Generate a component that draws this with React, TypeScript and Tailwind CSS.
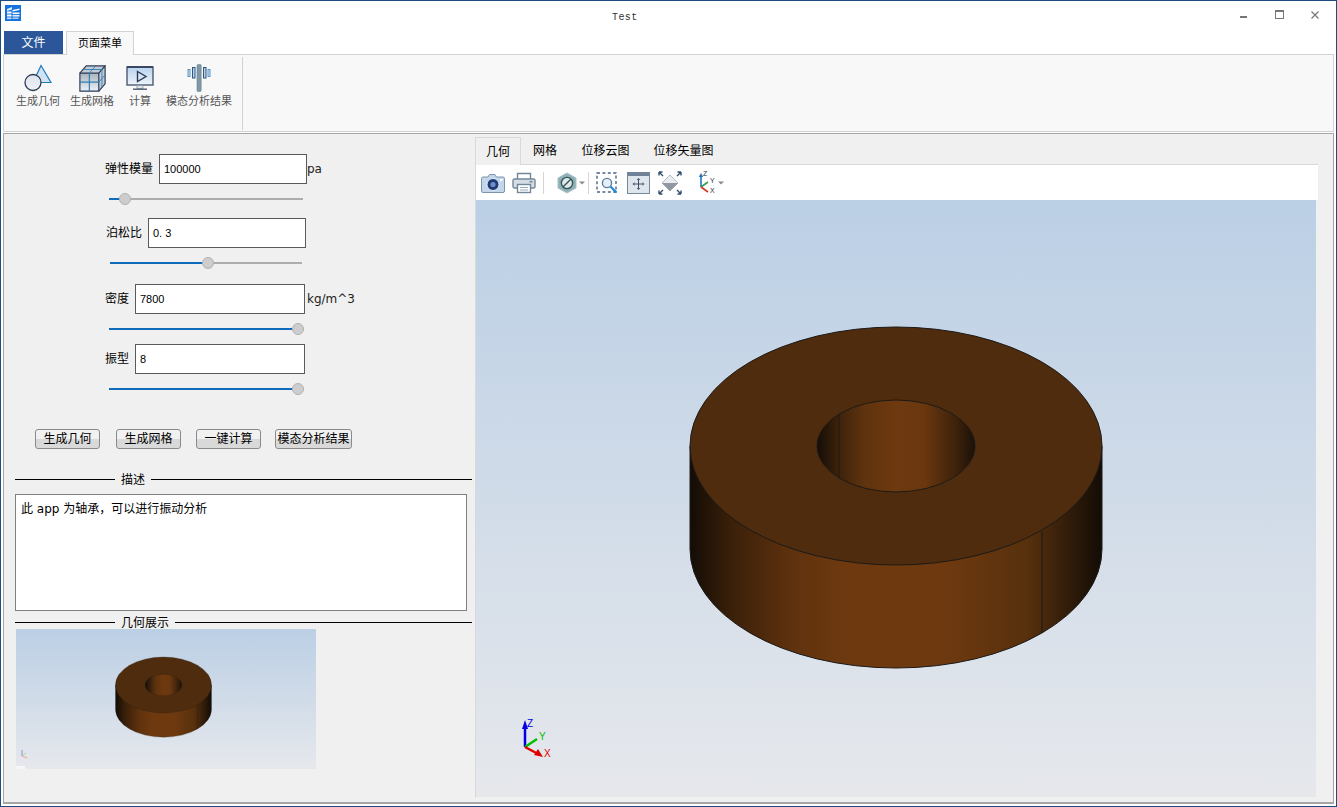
import React from "react";

const font = "font-['Liberation_Sans','Noto_Sans_CJK_SC',sans-serif]";
const wideFont = "font-['DejaVu_Sans','Noto_Sans_CJK_SC',sans-serif]";

// ---------- ribbon icons ----------
const GeometryIcon = () => (
  <svg width="28" height="28" viewBox="0 0 28 28">
    <defs>
      <linearGradient id="geoCircle" x1="0" y1="0" x2="0" y2="1">
        <stop offset="0" stopColor="#dfe4ec" />
        <stop offset="1" stopColor="#eef1f6" />
      </linearGradient>
    </defs>
    <path d="M17 1.5 L27 18.5 H9 Z" fill="#cfe3f4" stroke="#1f7ab8" strokeWidth="1.2" strokeLinejoin="miter" />
    <circle cx="9" cy="18.5" r="8" fill="url(#geoCircle)" stroke="#2b3a55" strokeWidth="1.3" />
  </svg>
);

const MeshIcon = () => (
  <svg width="27" height="27" viewBox="0 0 30 30">
    <defs>
      <linearGradient id="meshFace" x1="0" y1="0" x2="0" y2="1">
        <stop offset="0" stopColor="#aab3be" />
        <stop offset="1" stopColor="#eaf0f6" />
      </linearGradient>
    </defs>
    <path d="M1 9 L8 1 L29 1 L29 21 L22 29 L1 29 Z" fill="#c3ccd6" />
    <path d="M1 9 H22 V29 H1 Z" fill="url(#meshFace)" stroke="#2b3a55" strokeWidth="1.3" />
    <path d="M1 9 L8 1 H29 L22 9 M29 1 V21 L22 29" fill="none" stroke="#2b3a55" strokeWidth="1.3" />
    <path d="M11.5 9 V29 M1 19 H22" stroke="#2f7fb5" strokeWidth="1.3" />
    <path d="M11.5 9 L18.5 1 M5 5 H26 M22 19 L29 11 M25.5 5 V25" stroke="#2f7fb5" strokeWidth="1" fill="none" />
  </svg>
);

const ScreenIcon = () => (
  <svg width="28" height="24" viewBox="0 0 28 24" className="mb-[2px]">
    <defs>
      <linearGradient id="screenFace" x1="0" y1="0" x2="0" y2="1">
        <stop offset="0" stopColor="#b9d3ee" />
        <stop offset="1" stopColor="#eef4fa" />
      </linearGradient>
    </defs>
    <rect x="1" y="1" width="26" height="18" fill="url(#screenFace)" stroke="#4a5a72" strokeWidth="1.4" />
    <path d="M1 1 H27" stroke="#2b3a55" strokeWidth="1.6" />
    <path d="M11.5 5.5 L20 10.5 L11.5 15.5 Z" fill="none" stroke="#2b3a55" strokeWidth="1.4" />
    <rect x="11" y="19.5" width="6" height="3" fill="#dfe4ea" stroke="#8a96a4" strokeWidth="0.8" />
    <path d="M7 23.2 H21" stroke="#4a5a72" strokeWidth="1.4" />
  </svg>
);

const ModalIcon = () => (
  <svg width="24" height="28" viewBox="0 0 24 28">
    <rect x="10" y="0.5" width="4.2" height="27" rx="1" fill="#7f98a6" stroke="#6a8494" strokeWidth="0.6" />
    <rect x="5.5" y="3.5" width="2.5" height="10.5" fill="#b7d2e8" stroke="#2f5780" strokeWidth="1" />
    <rect x="16.5" y="3.5" width="2.5" height="10.5" fill="#b7d2e8" stroke="#2f5780" strokeWidth="1" />
    <rect x="1" y="5.5" width="2" height="7" fill="#d4e6f4" stroke="#4a8fc4" strokeWidth="0.9" />
    <rect x="21" y="5.5" width="2" height="7" fill="#d4e6f4" stroke="#4a8fc4" strokeWidth="0.9" />
  </svg>
);

const AppIcon = () => (
  <svg width="16" height="16" viewBox="0 0 16 16" className="shrink-0">
    <rect width="16" height="16" fill="#1672dd" />
    <path d="M2 4 L7 2 V4.5 L2 6 Z" fill="#dcecff" />
    <rect x="2" y="6.5" width="4.5" height="2" fill="#fff" />
    <rect x="2" y="9.5" width="4.5" height="2" fill="#fff" />
    <rect x="2" y="12.5" width="4.5" height="1.6" fill="#cfe3fb" />
    <path d="M7.5 5 L14.5 3.5 V5 L7.5 6.5 Z" fill="#fff" />
    <rect x="7.5" y="7.5" width="7" height="1.6" fill="#fff" />
    <rect x="7.5" y="10" width="7" height="1.6" fill="#e4f0fe" />
    <rect x="7.5" y="12.5" width="6" height="1.4" fill="#b9d6f8" />
  </svg>
);

// ---------- toolbar icons ----------
const Caret = () => (
  <svg width="6" height="4" viewBox="0 0 6 4" className="shrink-0">
    <path d="M0 0.5 H6 L3 3.5 Z" fill="#8a8a8a" />
  </svg>
);

const CameraIcon = () => (
  <svg width="24" height="20" viewBox="0 0 24 20">
    <path d="M2 4 H7 L8.5 1.5 H14 L15.5 4 H22 Q23.5 4 23.5 5.5 V18 Q23.5 19.5 22 19.5 H2 Q0.5 19.5 0.5 18 V5.5 Q0.5 4 2 4 Z" fill="#c3d6ea" stroke="#7d94ad" strokeWidth="1" />
    <circle cx="12" cy="11.5" r="6" fill="#203a78" stroke="#e6eef7" strokeWidth="1" />
    <circle cx="12" cy="11.5" r="2.6" fill="#6f8fc4" />
    <rect x="19" y="6" width="2.5" height="2" fill="#fff" />
  </svg>
);

const PrinterIcon = () => (
  <svg width="24" height="22" viewBox="0 0 24 22">
    <path d="M5.5 7 V1.5 H18.5 V7" fill="#fff" stroke="#73879a" strokeWidth="1.4" />
    <rect x="1" y="7" width="22" height="9" rx="1.5" fill="#d5dde5" stroke="#73879a" strokeWidth="1.4" />
    <rect x="17.5" y="9" width="3" height="1.5" fill="#73879a" />
    <rect x="5.5" y="12.5" width="13" height="8" fill="#fff" stroke="#73879a" strokeWidth="1.4" />
    <path d="M8 15.5 H16 M8 18 H16" stroke="#9aa9b8" strokeWidth="1" />
  </svg>
);

const HexIcon = () => (
  <svg width="20" height="22" viewBox="0 0 20 22">
    <path d="M10 1 L19 6 V16 L10 21 L1 16 V6 Z" fill="#8fb0b4" stroke="#a8c3c7" strokeWidth="1" />
    <circle cx="10" cy="11" r="5.6" fill="#dfe9ea" stroke="#33555c" strokeWidth="1.4" />
    <path d="M6.2 14.8 L13.8 7.2" stroke="#33555c" strokeWidth="1.4" />
  </svg>
);

const ZoomBoxIcon = () => (
  <svg width="22" height="22" viewBox="0 0 22 22">
    <rect x="1" y="1" width="19" height="19" fill="none" stroke="#4a6484" strokeWidth="1.4" strokeDasharray="3 2.4" />
    <circle cx="11" cy="11" r="4.6" fill="#e6f0f8" stroke="#5b7fa0" strokeWidth="1.4" />
    <path d="M14.5 14.5 L20.5 20.5" stroke="#1c8ad6" strokeWidth="2.2" />
  </svg>
);

const FitIcon = () => (
  <svg width="23" height="22" viewBox="0 0 23 22">
    <rect x="0.5" y="0.5" width="22" height="21" fill="#dfe5ec" stroke="#76889b" />
    <rect x="0.5" y="0.5" width="22" height="3.5" fill="#6f8298" />
    <path d="M11.5 8 V16 M7.5 12 H15.5" stroke="#3f5368" strokeWidth="1" />
    <path d="M11.5 6 L9.8 8 H13.2 Z M11.5 18 L9.8 16 H13.2 Z M5.5 12 L7.5 10.3 V13.7 Z M17.5 12 L15.5 10.3 V13.7 Z" fill="#3f5368" />
  </svg>
);

const DiamondIcon = () => (
  <svg width="24" height="24" viewBox="0 0 24 24">
    <path d="M12 4 L20 12 L12 20 L4 12 Z" fill="#e9ebee" stroke="#b4bcc5" />
    <path d="M4 12 L20 12 L12 20 Z" fill="#8f98a3" />
    <path d="M1 1 L5 5 M1 1 V4.5 M1 1 H4.5 M23 1 L19 5 M23 1 V4.5 M23 1 H19.5 M1 23 L5 19 M1 23 V19.5 M1 23 H4.5 M23 23 L19 19 M23 23 V19.5 M23 23 H19.5" stroke="#31506f" strokeWidth="1.4" fill="none" />
  </svg>
);

const AxesSmall = () => (
  <svg width="20" height="24" viewBox="0 0 20 24">
    <path d="M4 16 V5" stroke="#2273c4" strokeWidth="1.6" />
    <path d="M4 2 L1.8 6 H6.2 Z" fill="#2273c4" />
    <path d="M4 16 L11 11" stroke="#33a04a" strokeWidth="1.6" />
    <path d="M4 16 L11 21" stroke="#d9342b" strokeWidth="1.6" />
    <text x="6" y="5" fontSize="7" fill="#333" fontFamily="Liberation Sans">Z</text>
    <text x="13" y="12" fontSize="7" fill="#333" fontFamily="Liberation Sans">Y</text>
    <text x="13" y="22" fontSize="7" fill="#333" fontFamily="Liberation Sans">X</text>
  </svg>
);

// ---------- model ----------
const Bearing = ({ id }: { id: string }) => (
  <>
    <defs>
      <linearGradient id={`${id}-side`} x1="690" y1="0" x2="1102" y2="0" gradientUnits="userSpaceOnUse">
        <stop offset="0" stopColor="#130c06" />
        <stop offset="0.1" stopColor="#3a2009" />
        <stop offset="0.25" stopColor="#5f320e" />
        <stop offset="0.38" stopColor="#6e390f" />
        <stop offset="0.62" stopColor="#6e390f" />
        <stop offset="0.82" stopColor="#57300d" />
        <stop offset="0.93" stopColor="#2d1a09" />
        <stop offset="1" stopColor="#130c06" />
      </linearGradient>
      <linearGradient id={`${id}-hole`} x1="817" y1="0" x2="975" y2="0" gradientUnits="userSpaceOnUse">
        <stop offset="0" stopColor="#150d07" />
        <stop offset="0.15" stopColor="#40240b" />
        <stop offset="0.3" stopColor="#5f330e" />
        <stop offset="0.5" stopColor="#6e390f" />
        <stop offset="0.68" stopColor="#6a370f" />
        <stop offset="0.88" stopColor="#3d220b" />
        <stop offset="1" stopColor="#1c1108" />
      </linearGradient>
    </defs>
    <path
      d="M690 446 V549 A206 119 0 0 0 1102 549 V446 Z"
      fill={`url(#${id}-side)`}
      stroke="#1c1a18"
      strokeWidth="1"
    />
    <path d="M1042 531 V633" stroke="#1c1a18" strokeWidth="1" />
    <ellipse cx="896" cy="446" rx="206" ry="119" fill="#4f2c0d" stroke="#1c1a18" strokeWidth="1" />
    <ellipse cx="896" cy="446" rx="79" ry="46" fill={`url(#${id}-hole)`} stroke="#1c1a18" strokeWidth="1" />
    <path d="M839 414 V478" stroke="#1c1a18" strokeWidth="1" />
  </>
);

// ---------- form bits ----------
const Slider = ({ ml, width, thumb }: { ml: string; width: string; thumb: number }) => (
  <div className={`${ml} ${width} relative h-[16px] flex items-center mt-[7px]`}>
    <div className="w-full h-[2px] bg-[#adadad]" />
    <div className="absolute left-0 h-[2px] bg-[#0f6cbd]" style={{ width: thumb }} />
    <div
      className="absolute w-[12px] h-[12px] rounded-full bg-[#cdcdcd] border border-[#b2b2b2]"
      style={{ left: thumb - 6 }}
    />
  </div>
);

const Field = ({ value, width }: { value: string; width: string }) => (
  <div className={`${width} h-[30px] bg-white border border-[#5a5a5a] flex items-center pl-[4px] text-[11px] text-black shrink-0`}>
    {value}
  </div>
);

const ToolButton = ({ label, width }: { label: string; width: string }) => (
  <div className={`${width} h-[20px] flex items-center justify-center rounded-[3px] border border-[#8a8a8a] bg-[linear-gradient(#f1f1f1_50%,#d9d9d9_50%)] text-[12px] leading-none text-black whitespace-nowrap`}>
    {label}
  </div>
);

const Divider = ({ label, className }: { label: string; className: string }) => (
  <div className={`${className} ml-[11px] w-[457px] h-[14px] flex items-center gap-[6px] text-[12px] text-black`}>
    <div className="w-[100px] h-px bg-black" />
    <span className="whitespace-nowrap leading-none pt-[2px]">{label}</span>
    <div className="flex-1 h-px bg-black" />
  </div>
);

const RibbonItem = ({ label, icon, width }: { label: string; icon: React.ReactNode; width: string }) => (
  <div className={`${width} flex flex-col items-center`}>
    <div className="h-[28px] flex items-end justify-center">{icon}</div>
    <span className="mt-[2px] text-[11px] leading-[14px] text-[#555] whitespace-nowrap">{label}</span>
  </div>
);

const App = () => {
  return (
    <div className={`${font} w-[1337px] h-[807px] flex flex-col bg-white border border-[#1f4a7f] overflow-hidden`}>
      {/* Title bar */}
      <div className="h-[29px] shrink-0 flex items-start pt-[4px] pl-[4px]">
        <AppIcon />
        <span className="ml-[591px] mt-[7px] font-['Liberation_Mono',monospace] text-[10px] leading-[12px] tracking-[0.4px] text-[#333]">
          Test
        </span>
        <div className="ml-auto flex items-center pr-[17px] mt-[5px]">
          <div className="w-[7px] h-[2px] bg-[#777] mt-[5px]" />
          <div className="ml-[28px] w-[9px] h-[9px] border border-[#777] border-t-2" />
          <svg width="8" height="8" viewBox="0 0 8 8" className="ml-[27px]">
            <path d="M0.5 0.5 L7.5 7.5 M7.5 0.5 L0.5 7.5" stroke="#777" strokeWidth="1.2" />
          </svg>
        </div>
      </div>

      {/* Ribbon tabs */}
      <div className="h-[24px] shrink-0 flex items-end pl-[3px] gap-[3px]">
        <div className="w-[59px] h-[23px] bg-[#2b579a] text-white text-[12px] flex items-center justify-center">文件</div>
        <div className="w-[68px] h-[24px] -mb-px z-10 bg-[#f8f8f8] border border-[#d2d2d2] border-b-0 text-black text-[11px] flex items-center justify-center">
          页面菜单
        </div>
      </div>

      {/* Ribbon */}
      <div className="h-[78px] shrink-0 mx-[2px] bg-[#f8f8f8] border border-[#d2d2d2] flex items-start">
        <div className="flex pt-[9px] pl-[7px] w-[238px] h-[76px]">
          <RibbonItem label="生成几何" icon={<GeometryIcon />} width="w-[54px]" />
          <RibbonItem label="生成网格" icon={<MeshIcon />} width="w-[54px]" />
          <RibbonItem label="计算" icon={<ScreenIcon />} width="w-[42px]" />
          <RibbonItem label="模态分析结果" icon={<ModalIcon />} width="w-[76px]" />
        </div>
        <div className="w-px h-[73px] mt-[2px] bg-[#d2d2d2]" />
      </div>

      {/* Main panel */}
      <div className="h-[671px] shrink-0 mt-px mx-[2px] border border-[#a6a6a6] border-b-2 bg-[#f0f0f0] flex">
        {/* Left column */}
        <div className="w-[471px] shrink-0 flex flex-col">
          <div className="mt-[20px] ml-[101px] flex items-center">
            <span className="w-[49px] text-[12px] text-black whitespace-nowrap">弹性模量</span>
            <div className="w-[5px]" />
            <Field value="100000" width="w-[148px]" />
            <span className={`${wideFont} text-[12px] text-[#222]`}>pa</span>
          </div>
          <Slider ml="ml-[105px]" width="w-[194px]" thumb={16} />

          <div className="mt-[11px] ml-[102px] flex items-center">
            <span className="w-[37px] text-[12px] text-black whitespace-nowrap">泊松比</span>
            <div className="w-[5px]" />
            <Field value="0. 3" width="w-[158px]" />
          </div>
          <Slider ml="ml-[106px]" width="w-[192px]" thumb={98} />

          <div className="mt-[13px] ml-[101px] flex items-center">
            <span className="w-[24px] text-[12px] text-black whitespace-nowrap">密度</span>
            <div className="w-[6px]" />
            <Field value="7800" width="w-[170px]" />
            <span className={`${wideFont} ml-[2px] text-[12px] text-[#222]`}>kg/m^3</span>
          </div>
          <Slider ml="ml-[105px]" width="w-[195px]" thumb={189} />

          <div className="mt-[7px] ml-[101px] flex items-center">
            <span className="w-[24px] text-[12px] text-black whitespace-nowrap">振型</span>
            <div className="w-[6px]" />
            <Field value="8" width="w-[170px]" />
          </div>
          <Slider ml="ml-[105px]" width="w-[195px]" thumb={189} />

          <div className="mt-[32px] ml-[31px] flex">
            <ToolButton label="生成几何" width="w-[65px]" />
            <div className="w-[16px]" />
            <ToolButton label="生成网格" width="w-[65px]" />
            <div className="w-[15px]" />
            <ToolButton label="一键计算" width="w-[65px]" />
            <div className="w-[14px]" />
            <ToolButton label="模态分析结果" width="w-[77px]" />
          </div>

          <Divider label="描述" className="mt-[23px]" />

          <div className={`${wideFont} mt-[8px] ml-[11px] w-[452px] h-[117px] bg-white border border-[#808080] px-[5px] py-[7px] text-[12px] leading-[15px] text-black`}>
            此 app 为轴承，可以进行振动分析
          </div>

          <Divider label="几何展示" className="mt-[4px]" />

          <div className="ml-[12px] w-[300px] h-[140px] shrink-0 bg-[linear-gradient(#bbcfe5,#e6e8ec)]">
            <svg width="300" height="140" viewBox="0 0 300 140" className="block">
              <g transform="translate(147.5 56) scale(0.2330 0.2353) translate(-896 -446)">
                <Bearing id="thumb" />
              </g>
              <path d="M6 127 V121" stroke="#8f8fe0" strokeWidth="1" />
              <path d="M6 127 L10 124" stroke="#a8d8a8" strokeWidth="1" />
              <path d="M6 127 L11 129" stroke="#f0a0a0" strokeWidth="1" />
              <rect x="0" y="137" width="9" height="3" fill="#f6f6f6" />
            </svg>
          </div>
        </div>

        {/* Right column */}
        <div className="flex-1 flex flex-col pr-[15px] pt-[2px]">
          <div className="h-[28px] shrink-0 flex items-end text-[12px] text-black">
            <div className="w-[46px] h-[28px] -mb-px z-10 bg-[#f0f0f0] border border-[#d9d9d9] border-b-0 flex items-center justify-center">几何</div>
            <div className="w-[48px] h-[27px] flex items-center justify-center">网格</div>
            <div className="w-[73px] h-[27px] flex items-center justify-center">位移云图</div>
            <div className="w-[83px] h-[27px] flex items-center justify-center">位移矢量图</div>
          </div>
          <div className="h-[634px] flex flex-col border-l border-t border-[#d9d9d9]">
            {/* Viewer toolbar */}
            <div className="h-[35px] shrink-0 bg-white flex items-center pl-[5px]">
              <CameraIcon />
              <div className="w-[7px]" />
              <PrinterIcon />
              <div className="ml-[7px] w-px h-[22px] bg-[#d5d5d5]" />
              <div className="ml-[13px]"><HexIcon /></div>
              <div className="ml-[2px]"><Caret /></div>
              <div className="ml-[3px] w-px h-[22px] bg-[#d5d5d5]" />
              <div className="ml-[7px]"><ZoomBoxIcon /></div>
              <div className="ml-[9px]"><FitIcon /></div>
              <div className="ml-[8px]"><DiamondIcon /></div>
              <div className="ml-[15px]"><AxesSmall /></div>
              <div className="ml-[1px]"><Caret /></div>
            </div>
            {/* 3D viewport */}
            <div className="w-[840px] h-[597px] shrink-0 bg-[linear-gradient(#bbcfe5,#e6e8ec)]">
              <svg width="840" height="597" viewBox="476 200 840 597" className="block">
                <Bearing id="main" />
                <path d="M525 747 V727" stroke="#0000e0" strokeWidth="2.5" />
                <path d="M525 720 L522 729 H528 Z" fill="#0000e0" />
                <path d="M525 747 L537 739" stroke="#00c000" strokeWidth="2.5" />
                <path d="M525 747 L540 755" stroke="#e00000" strokeWidth="2.5" />
                <path d="M543 757 L534 755 L538 749 Z" fill="#e00000" />
                <text x="527" y="727" fontSize="10" fill="#0000e0" fontFamily="Liberation Sans">Z</text>
                <text x="539" y="740" fontSize="10" fill="#00c000" fontFamily="Liberation Sans">Y</text>
                <text x="544" y="757" fontSize="10" fill="#e00000" fontFamily="Liberation Sans">X</text>
              </svg>
            </div>
          </div>
        </div>
      </div>
    </div>
  );
};

export default App;
